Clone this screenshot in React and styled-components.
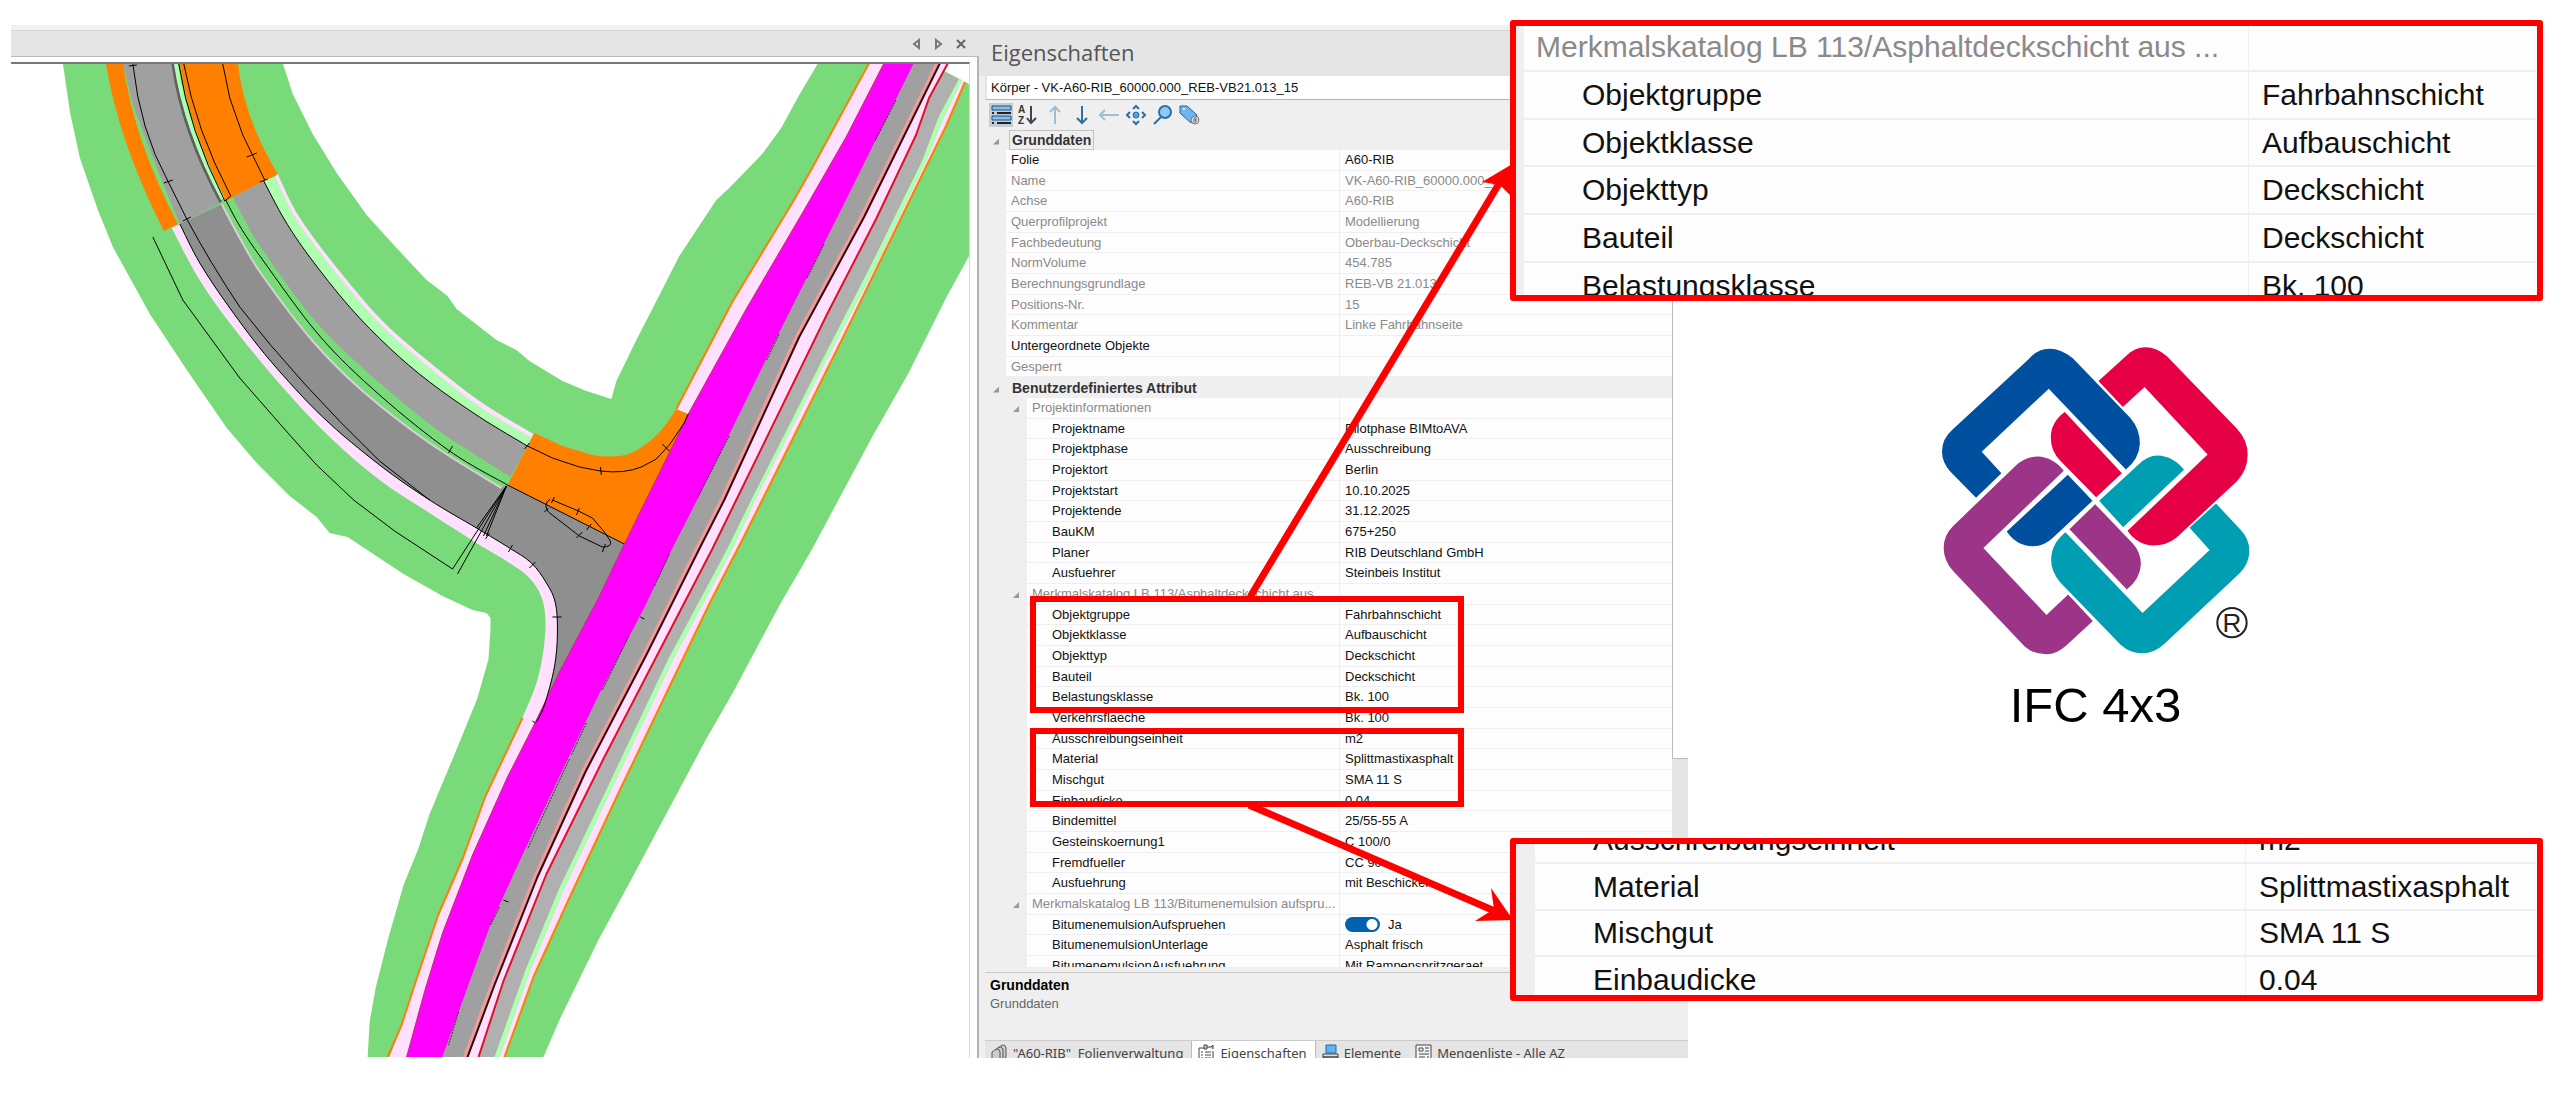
import React from 'react';
import styled, { createGlobalStyle, css } from 'styled-components';

const GlobalStyle = createGlobalStyle`
  body {
    margin: 0;
    background: #fff;
    font-family: 'Liberation Sans', Arial, sans-serif;
  }

  *,
  *::before,
  *::after {
    box-sizing: border-box;
  }
`;

const Slide = styled.main`
  display: flex;
  align-items: flex-start;
  padding: 20px 17px 40px 11px;
`;

const Workspace = styled.section`
  display: flex;
  flex: 1;
  min-width: 0;
  margin-top: 5px;
`;

/* ---------- map ---------- */

const MapPane = styled.div`
  display: flex;
  flex-direction: column;
  flex: 1;
  min-width: 0;
  border-top: 5px solid #f1f1f1;
`;

const MapHeader = styled.div`
  display: flex;
  justify-content: flex-end;
  align-items: center;
  gap: 7px;
  height: 27px;
  padding-right: 11px;
  background: #e5e5e5;
  border-top: 1px solid #d6d6d6;
  border-bottom: 1px solid #bdbdbd;
`;

const HeaderButton = styled.button`
  display: flex;
  align-items: center;
  justify-content: center;
  width: 15px;
  height: 16px;
  padding: 0;
  border: 0;
  background: none;
`;

const MapFrame = styled.div`
  flex: 1;
  display: flex;
  padding: 5px 7px 0 0;
  border-right: 2px solid #b4b4b4;
`;

const MapCanvas = styled.div`
  flex: 1;
  min-width: 0;
  border-top: 2px solid #777;
  border-right: 1px solid #d8d8d8;

  svg {
    display: block;
    width: 100%;
    height: 993px;
  }
`;

/* ---------- properties panel ---------- */

const Panel = styled.aside`
  position: relative;
  flex: none;
  width: 709px;
  padding-left: 6px;
  background: #efefef;
  border-top: 5px solid #f1f1f1;
`;

const PanelTitle = styled.h2`
  margin: 0 0 0 -6px;
  padding-left: 12px;
  height: 46px;
  border-top: 1px solid #d6d6d6;
  background: #e5e5e5;
  color: #555;
  font: 400 22px/43px 'Open Sans', 'Noto Sans', sans-serif;
`;

const ObjectSelect = styled.select`
  display: block;
  width: 100%;
  height: 24px;
  padding: 0 4px;
  appearance: none;
  border: 0;
  border-bottom: 1px solid #b4b4b4;
  border-left: 2px solid #e5e5e5;
  border-radius: 0;
  background: #fff;
  color: #111;
  font: 13px/22px 'Liberation Sans', Arial, sans-serif;
`;

const Toolbar = styled.div`
  display: flex;
  align-items: center;
  gap: 3px;
  height: 29px;
  padding-left: 4px;
`;

const ToolButton = styled.button`
  display: flex;
  align-items: center;
  justify-content: center;
  width: 24px;
  height: 24px;
  padding: 0;
  border: 0;
  background: ${props => (props.$active ? '#c5cdd4' : 'none')};
`;

const GridArea = styled.div`
  display: flex;
  max-height: 838px;
  overflow: hidden;
`;

const Scrollbar = styled.div`
  display: flex;
  flex: none;
  flex-direction: column;
  width: 16px;
  background: #e5e5e5;
`;

const ScrollThumb = styled.div`
  height: 630px;
  background: #fff;
  border-left: 1px solid #bbb;
  border-bottom: 1px solid #bbb;
`;

const callout = css`
  font-size: 30px;
  line-height: 40px;
`;

const Table = styled.table`
  flex: 1;
  width: 100%;
  table-layout: fixed;
  border-collapse: separate;
  border-spacing: 0;
  font-size: 13px;
  line-height: 18px;
  text-align: left;
  ${props => props.$large && callout}

  col:first-child {
    width: ${props => props.$labelWidth}px;
  }

  tr {
    height: ${props => props.$pitch}px;
  }

  tr:nth-child(3n) {
    height: ${props => props.$pitch - 1}px;
  }
`;

const Label = styled.th`
  padding: 0 0 0 ${props => props.$pad}px;
  border-left: ${props => props.$gutter}px solid #efefef;
  border-bottom: ${props => (props.$large ? 2 : 1)}px solid #efefef;
  background: #fdfdfd;
  color: ${props => (props.$muted ? '#8a8a8a' : '#111')};
  font-weight: 400;
  white-space: nowrap;
`;

const Value = styled.td`
  padding: 0 0 0 ${props => (props.$large ? 13 : 5)}px;
  border-left: 1px solid #efefef;
  border-bottom: ${props => (props.$large ? 2 : 1)}px solid #efefef;
  background: #fdfdfd;
  color: ${props => (props.$muted ? '#8a8a8a' : '#111')};
  white-space: nowrap;
`;

const Heading = styled.th`
  padding: 0 0 0 8px;
  background: #efefef;
  color: #333;
  font-size: 14px;
`;

const HeadingText = styled.span`
  display: inline-block;
  padding: 0 2px;
  outline: ${props => (props.$focused ? '1px solid #c4c4c4' : 'none')};
`;

const Expander = styled.button`
  width: 6px;
  height: 6px;
  margin: 0 ${props => (props.$nested ? 13 : 11)}px 1px
    ${props => (props.$nested ? '-19px' : '0')};
  padding: 0;
  border: 0;
  background: #999;
  clip-path: polygon(100% 0, 100% 100%, 0 100%);
`;

const Switch = styled.label`
  display: flex;
  align-items: center;
  gap: 8px;
`;

const SwitchInput = styled.input`
  appearance: none;
  width: 35px;
  height: 15px;
  margin: 0;
  border-radius: 8px;
  background: radial-gradient(
    circle at 27px 50%,
    #fff 0,
    #fff 5px,
    #0063b1 6px
  );
`;

const Description = styled.div`
  height: 68px;
  margin: 5px 0 0;
  padding: 2px 5px;
  border-top: 1px solid #c8c8c8;
  font-size: 13px;
  line-height: 18px;

  strong {
    display: block;
    font-size: 14px;
    line-height: 20px;
  }

  span {
    color: #666;
  }
`;

const Tabs = styled.div`
  display: flex;
  align-items: flex-start;
  height: 18px;
  overflow: hidden;
  background: #e5e5e5;
  border-top: 1px solid #ccc;
`;

const Tab = styled.button`
  display: flex;
  align-items: center;
  gap: 5px;
  height: 24px;
  padding: 0 8px 0 6px;
  border: 0;
  border-right: ${props => (props.$divided ? '1px solid #bbb' : '0')};
  background: ${props => (props.$active ? '#fff' : 'none')};
  color: #444;
  font: 13px/20px 'Noto Sans', 'Open Sans', sans-serif;
  white-space: pre;
`;

/* ---------- annotations ---------- */

const Highlight = styled.div`
  position: absolute;
  left: 51px;
  top: ${props => props.$top}px;
  width: 434px;
  height: ${props => props.$height}px;
  border: 6px solid #fe0000;
`;

const Arrows = styled.svg`
  position: absolute;
  left: 0;
  top: -5px;
  overflow: visible;
  pointer-events: none;
`;

const Figures = styled.section`
  position: relative;
  flex: none;
  width: 1033px;
  margin-left: -178px;
`;

const Callout = styled.div`
  height: ${props => props.$height}px;
  overflow: hidden;
  border: 6px solid #fe0000;
  border-radius: 3px;
  background: #fdfdfd;

  table {
    margin-top: -${props => props.$scroll}px;
  }
`;

const Brand = styled.figure`
  display: flex;
  flex-direction: column;
  align-items: center;
  height: 537px;
  margin: 0;
  padding: 46px 0 0 138px;
`;

const BrandName = styled.figcaption`
  margin-top: 20px;
  color: #000;
  font-size: 49px;
  line-height: 60px;
`;

const baseRows = [
  ['Folie', 'A60-RIB', true],
  ['Name', 'VK-A60-RIB_60000.000_REB'],
  ['Achse', 'A60-RIB'],
  ['Querprofilprojekt', 'Modellierung'],
  ['Fachbedeutung', 'Oberbau-Deckschicht'],
  ['NormVolume', '454.785'],
  ['Berechnungsgrundlage', 'REB-VB 21.013'],
  ['Positions-Nr.', '15'],
  ['Kommentar', 'Linke Fahrbahnseite'],
  ['Untergeordnete Objekte', '', true],
  ['Gesperrt', '']
];

const groups = [
  {
    title: 'Projektinformationen',
    rows: [
      ['Projektname', 'Pilotphase BIMtoAVA'],
      ['Projektphase', 'Ausschreibung'],
      ['Projektort', 'Berlin'],
      ['Projektstart', '10.10.2025'],
      ['Projektende', '31.12.2025'],
      ['BauKM', '675+250'],
      ['Planer', 'RIB Deutschland GmbH'],
      ['Ausfuehrer', 'Steinbeis Institut']
    ]
  },
  {
    title: 'Merkmalskatalog LB 113/Asphaltdeckschicht aus ...',
    rows: [
      ['Objektgruppe', 'Fahrbahnschicht'],
      ['Objektklasse', 'Aufbauschicht'],
      ['Objekttyp', 'Deckschicht'],
      ['Bauteil', 'Deckschicht'],
      ['Belastungsklasse', 'Bk. 100'],
      ['Verkehrsflaeche', 'Bk. 100'],
      ['Ausschreibungseinheit', 'm2'],
      ['Material', 'Splittmastixasphalt'],
      ['Mischgut', 'SMA 11 S'],
      ['Einbaudicke', '0.04'],
      ['Bindemittel', '25/55-55 A'],
      ['Gesteinskoernung1', 'C 100/0'],
      ['Fremdfueller', 'CC 90'],
      ['Ausfuehrung', 'mit Beschicker']
    ]
  },
  {
    title: 'Merkmalskatalog LB 113/Bitumenemulsion aufspru...',
    rows: [
      ['BitumenemulsionAufspruehen', true],
      ['BitumenemulsionUnterlage', 'Asphalt frisch'],
      ['BitumenemulsionAusfuehrung', 'Mit Rampenspritzgeraet']
    ]
  }
];

// Long edges of the main road, from the top of the map to the bottom.
const edges = {
  verge: [[870, 63], [813, 168], [793, 203], [733, 302], [677, 409]],
  vergeInner: [[885, 63], [847, 137], [805, 210], [747, 309], [689, 414]],
  left: [
    [885, 63], [847, 137], [805, 210], [747, 309], [689, 414], [625, 544],
    [599, 598], [560, 672], [536, 722], [508, 777], [473, 855], [443, 933],
    [426, 988], [407, 1057]
  ],
  laneRight: [
    [915, 63], [847, 200], [780, 333], [730, 435], [698, 500], [673, 549],
    [647, 604], [599, 696], [560, 777], [525, 851], [491, 925], [473, 974],
    [443, 1057]
  ],
  middle: [
    [941, 63], [865, 217], [800, 337], [725, 500], [700, 549], [647, 655],
    [586, 772], [538, 877], [495, 985], [468, 1057]
  ],
  red: [
    [949, 63], [930, 98], [917, 135], [877, 219], [828, 314], [737, 500],
    [713, 549], [673, 626], [604, 759], [547, 874], [504, 981], [479, 1057]
  ],
  strip: [
    [960, 79], [940, 116], [923, 161], [873, 263], [817, 372], [752, 500],
    [728, 549], [669, 659], [604, 796], [560, 888], [526, 970], [495, 1057]
  ],
  stripInner: [
    [963, 80], [944, 119], [927, 161], [877, 265], [821, 372], [756, 500],
    [733, 549], [674, 659], [609, 796], [565, 888], [531, 970], [500, 1057]
  ],
  outer: [
    [966, 82], [947, 126], [923, 175], [847, 331], [763, 500], [743, 540],
    [712, 600], [669, 689], [621, 789], [569, 900], [534, 977], [505, 1057]
  ]
};

// Edges of the curved ramp, from its upper end to the junction.
const ramp = {
  kerbOuter: [
    [172, 228], [198, 277], [230, 323], [280, 384], [330, 437], [380, 480],
    [430, 513], [477, 543], [510, 563], [530, 578], [542, 597], [546, 620],
    [544, 650], [537, 683], [523, 718]
  ],
  kerb: [
    [180, 224], [200, 263], [230, 308], [270, 360], [323, 417], [380, 465],
    [430, 500], [477, 528], [510, 548], [532, 563], [547, 583], [556, 603],
    [558, 633], [555, 667], [545, 705], [537, 722]
  ],
  medianLow: [
    [222, 204], [240, 238], [263, 276], [313, 341], [363, 391], [430, 443],
    [502, 488]
  ],
  medianLine: [
    [226, 200], [240, 226], [263, 260], [320, 336], [380, 395], [450, 451],
    [508, 485]
  ],
  medianHigh: [
    [233, 197], [245, 220], [263, 250], [313, 318], [363, 368], [430, 424],
    [470, 451], [511, 477]
  ],
  laneHigh: [
    [264, 181], [285, 220], [310, 257], [350, 307], [390, 348], [430, 382],
    [480, 417], [528, 446]
  ],
  grassHigh: [
    [275, 177], [297, 220], [333, 269], [380, 324], [430, 368], [480, 407],
    [532, 438]
  ],
  edgeHigh: [
    [278, 174], [299, 216], [335, 265], [382, 320], [431, 363], [480, 401],
    [534, 434]
  ]
};

const line = points => `M${points.map(p => p.join(' ')).join('L')}`;
const band = (a, b) => `${line(a.concat([...b].reverse()))}Z`;

// Catmull-Rom segments through the points, without the leading move.
const bend = points =>
  points
    .slice(1)
    .map(([x, y], i) => {
      const [px, py] = points[i];
      const [ax, ay] = points[i - 1] || points[i];
      const [bx, by] = points[i + 2] || points[i + 1];
      return `C${px + (x - ax) / 6} ${py + (y - ay) / 6} ${x -
        (bx - px) / 6} ${y - (by - py) / 6} ${x} ${y}`;
    })
    .join('');

const curve = points => `M${points[0].join(' ')}${bend(points)}`;
const curvedBand = (a, b) => {
  const back = [...b].reverse();
  return `${curve(a)}L${back[0].join(' ')}${bend(back)}Z`;
};

const ticks = [
  [129, 66, 137, 65], [164, 183, 173, 180], [183, 221, 191, 217],
  [247, 157, 257, 153], [260, 182, 268, 179], [449, 453, 453, 446],
  [525, 449, 530, 443], [601, 467, 602, 475], [663, 444, 670, 451],
  [552, 503, 555, 497], [577, 515, 580, 508], [587, 530, 592, 524],
  [577, 538, 583, 532], [603, 552, 606, 544], [545, 512, 549, 508],
  [509, 552, 513, 545], [530, 568, 536, 562], [553, 617, 562, 617],
  [486, 539, 490, 533], [533, 721, 536, 723], [641, 617, 645, 619],
  [504, 900, 509, 902]
];

function RoadMap() {
  return (
    <svg viewBox="11 64 959 993" preserveAspectRatio="none">
      <path
        fill="#78da78"
        d="M63 64L70 112 80 158 98 210 113 247 150 314 187 370 227 428 257 463 290 496 317 517 330 533 348 537 404 574 443 596 473 610 487 613 491 618 491 629 489 659 478 698 456 752 430 814 419 848 404 885 389 937 376 988 370 1022 368 1057 544 1057 560 1020 599 940 630 883 708 737 734 692 781 604 813 549 873 437 910 372 947 298 970 256 970 84 930 63 819 63 800 95 782 128 763 154 730 188 717 200 680 256 653 309 637 340 617 381 612 399 587 391 563 381 530 361 517 350 497 340 457 309 448 296 427 280 397 248 367 215 337 173 313 134 293 94 283 63Z"
      />

      {/* ramp */}
      <path
        fill="#a0a0a0"
        d="M123 63L133 105 157 168 180 224 221 203 197 154 180 98 172 63Z"
      />
      <path
        fill="#ff8000"
        d="M106 63Q118 140 164 231L178 224Q134 140 123 63ZM180 63Q190 130 226 201L278 174Q245 120 238 63Z"
      />
      <path fill="none" stroke="#606060" strokeWidth="3" d="M173 63Q182 130 221 202" />
      <path fill="none" stroke="#b0ffb0" strokeWidth="4" d="M176 63Q186 130 223 199" />
      <path fill="#ffe0ff" d={curvedBand(ramp.kerbOuter, ramp.kerb)} />
      <path fill="#8f8f8f" d={curvedBand(ramp.kerb.slice(0, 8), ramp.medianLow)} />
      <path fill="#8f8f8f" d={`${curve(ramp.kerb.slice(7))}L625 544 508 485 502 488Z`} />
      <path fill="#a0a0a0" d={curvedBand(ramp.medianHigh, ramp.laneHigh)} />
      <path fill="#b0ffb0" d={curvedBand(ramp.laneHigh, ramp.grassHigh)} />
      <path fill="#ffe0ff" d={curvedBand(ramp.grassHigh, ramp.edgeHigh)} />
      <path fill="none" stroke="#d8d0d8" strokeWidth="2" d={curve(ramp.medianLow)} />
      <path
        fill="#ff8000"
        d="M535 433L563 446 593 455Q610 458 627 455 650 446 667 424L677 409 689 414 625 544 508 485Z"
      />

      {/* main road */}
      <path fill="#ffe0ff" d={band(edges.verge, edges.vergeInner)} />
      <path
        fill="#ffe0ff"
        d="M523 718L486 796 463 859 439 914 415 985 402 1025 390 1057 407 1057 426 988 443 933 473 855 508 777 537 722Z"
      />
      <path fill="#ff00ff" d={band(edges.left, edges.laneRight)} />
      <path fill="#a0a0a0" d={band(edges.laneRight, [[930, 63], ...edges.middle])} />
      <path fill="#ffe0ff" d={band(edges.middle, edges.red)} />
      <path fill="#b0b0b0" d={band([[946, 73], ...edges.red.slice(1)], edges.strip)} />
      <path fill="#b0ffb0" d={band(edges.strip, edges.stripInner)} />
      <path fill="#ffe0ff" d={band(edges.stripInner, edges.outer)} />
      <g fill="none" strokeLinejoin="round">
        <path stroke="#ff8000" strokeWidth="2" d={line(edges.verge)} />
        <path
          stroke="#ff8000"
          strokeWidth="2"
          d="M523 718L486 796 463 859 439 914 415 985 402 1025 388 1057"
        />
        <path stroke="#f59a9a" strokeWidth="3" transform="translate(-3 0)" d={line(edges.middle)} />
        <path stroke="#3a0808" strokeWidth="2" d={line(edges.middle)} />
        <path stroke="#e0102a" strokeWidth="2" d={line(edges.red)} />
        <path stroke="#ff8000" strokeWidth="2" d={line(edges.outer)} />
        <path stroke="#c03060" strokeWidth="1" d={line(edges.left)} />
      </g>
      <path
        fill="none"
        stroke="#50204a"
        strokeDasharray="2 1"
        d="M897 100L876 141M825 244L808 278M780 334L767 361M730 436L698 498M670 554L655 586M629 637L603 690M587 723L572 755M570 759L528 849M500 907L491 925M459 1012L449 1045"
      />

      {/* alignment lines */}
      <g fill="none" stroke="#000" strokeWidth="1">
        <path d={curve(ramp.kerb)} />
        <path d={curve(ramp.laneHigh)} />
        <path d={curve(ramp.medianLine)} />
        <path d="M508 485L625 544" />
        <path d="M133 64Q140 130 168 181L187 219Q210 262 240 307 300 384 380 461L430 500" />
        <path d="M179 64Q189 130 225 201L231 196Q196 130 184 64" />
        <path d="M223 64L230 98 243 135 265 180" />
        <path d="M153 237L183 300 240 378 290 435 317 465 354 500 395 531 453 569 507 486" />
        <path d="M507 486L458 574M507 486L477 528M507 486L484 536M507 486L487 536" />
        <path d="M528 446L553 458 580 467 601 471Q625 474 642 467L657 459 670 445 685 423 689 414" />
        <path d="M553 500L579 511 593 518 605 532 611 541Q613 547 603 547L580 536 549 512Q543 504 551 499" />
        {ticks.map(([x1, y1, x2, y2]) => (
          <path key={`${x1}-${y1}`} d={`M${x1} ${y1}L${x2} ${y2}`} />
        ))}
      </g>
    </svg>
  );
}

function Logo() {
  return (
    <svg width="308" height="308" viewBox="126 80 923 923">
      <path
        fill="#00509f"
        d="M228 532L150 452Q126 425 126 393 126 355 157 328L387 115Q413 85 447 85 485 85 518 114L690 292Q719 325 719 370 717 415 677 447L446 205 245 394 304 458ZM503 463L577 541 460 650Q433 677 398 677 350 677 320 633Z"
      />
      <path
        fill="#e60045"
        d="M595 182L680 105Q705 81 735 81 770 81 800 108L1010 325Q1042 360 1042 402 1042 448 1010 482L830 650Q800 675 757 675 710 672 682 631L922 402 733 200 668 260ZM494 275L665 458 588 530 480 420Q452 392 452 352 452 305 494 275Z"
      />
      <path
        fill="#9c3488"
        d="M491 451L250 682 439 883 504 822 578 901 500 973Q470 1001 438 1001 400 1001 373 977L160 752Q131 720 131 682 131 645 158 618L345 437Q375 408 412 408 460 410 491 451ZM585 551L697 668Q722 695 722 732 720 775 680 807L508 626Z"
      />
      <path
        fill="#009eb2"
        d="M597 541L715 432Q742 405 772 405 820 407 851 448L669 620ZM947 549L1020 627Q1047 655 1047 690 1047 730 1018 758L792 970Q762 998 725 998 690 998 662 973L480 785Q453 752 453 718 453 670 496 635L727 877 928 688 868 622Z"
      />
      <circle cx="995" cy="906" r="44" fill="none" stroke="#222" strokeWidth="6" />
      <text
        x="995"
        y="935"
        textAnchor="middle"
        fill="#222"
        fontFamily="Liberation Sans, sans-serif"
        fontSize="78"
      >
        R
      </text>
    </svg>
  );
}

const ink = { fill: 'none', stroke: '#2f6f9f', strokeWidth: 2 };

const tools = [
  {
    name: 'Kategorisiert',
    icon: (
      <>
        <path d="M2 2h19v4H2zM2 12h19v4H2z" fill="#7fc0f2" stroke="#23527a" />
        <path d="M7 9h14M7 19h14M2 9h2M2 19h2" stroke="#222" strokeWidth="2" />
      </>
    )
  },
  {
    name: 'Alphabetisch',
    icon: (
      <>
        <text x="1" y="9" fontSize="10" fontWeight="700" fill="#333">A</text>
        <text x="1" y="20" fontSize="10" fontWeight="700" fill="#333">Z</text>
        <path d="M14 2v17M10 14l4 5 5-5" fill="none" stroke="#444" strokeWidth="2" />
      </>
    )
  },
  { name: 'Nach oben', icon: <path d="M11 20V3M6 8l5-5 5 5" {...ink} stroke="#9dbfd2" /> },
  { name: 'Nach unten', icon: <path d="M11 2v17M6 14l5 5 5-5" {...ink} /> },
  { name: 'Zurück', icon: <path d="M21 11H2M7 6l-5 5 5 5" {...ink} stroke="#9dbfd2" /> },
  {
    name: 'Zentrieren',
    icon: (
      <>
        <circle cx="11" cy="11" r="3" fill="#4aa3e8" stroke="#1f6aa5" />
        <path d="M8 5l3-3 3 3M8 17l3 3 3-3M5 8l-3 3 3 3M17 8l3 3-3 3" {...ink} />
      </>
    )
  },
  {
    name: 'Suchen',
    icon: (
      <>
        <path d="M9 13l-7 7" {...ink} />
        <circle cx="13" cy="8" r="6" fill="#8fc8f5" stroke="#2f6f9f" strokeWidth="2" />
      </>
    )
  },
  {
    name: 'Merkmale',
    icon: (
      <>
        <path d="M1 2h7l10 9-6 8L1 9z" fill="#6fb4ec" stroke="#23629a" />
        <circle cx="5" cy="5" r="1" fill="#fff" />
        <circle cx="16" cy="16" r="4" fill="#d8d8d8" stroke="#777" />
        <path d="M14 15h4M14 17h4M16 13v6" stroke="#777" />
      </>
    )
  }
];

const tabs = [
  {
    name: '"A60-RIB"  Folienverwaltung',
    divided: true,
    icon: (
      <g fill="#ccc" stroke="#555">
        <path d="M7 4q7-6 8 0v9l-4 3z" />
        <path d="M4 6q7-6 8 0v9l-4 3z" />
        <path d="M1 8q7-6 8 0v9H1z" />
      </g>
    )
  },
  {
    name: 'Eigenschaften',
    active: true,
    divided: true,
    icon: (
      <g fill="none" stroke="#444">
        <path d="M6 4H1v13h14V7" />
        <path d="M3 8h2M3 11h2M3 14h2M7 8h6M7 11h6M7 14h6" />
        <path d="M6 1h3v4H6zM9 3h4l2-2v4" fill="#ccc" />
      </g>
    )
  },
  {
    name: 'Elemente',
    icon: (
      <>
        <path d="M4 1h10v8H4z" fill="#5fb4f0" stroke="#1f6aa5" />
        <path d="M1 10h15v3H1zM1 13h15v3H1z" fill="#ddd" stroke="#444" />
      </>
    )
  },
  {
    name: 'Mengenliste - Alle AZ',
    icon: (
      <g fill="none" stroke="#444">
        <path d="M1 1h15v15H1z" fill="#f4f4f4" />
        <path d="M4 4h4v3H4zM10 4h4M10 7h4M4 10h10M4 13h6M12 13h2" />
      </g>
    )
  }
];

function GroupRows({ title, rows }) {
  return (
    <>
      <tr>
        <Label $gutter={42} $pad={5} $muted>
          <Expander $nested aria-label={title} />
          {title}
        </Label>
        <Value />
      </tr>
      {rows.map(([label, value]) => (
        <tr key={label}>
          <Label $gutter={42} $pad={25}>
            {label}
          </Label>
          <Value>
            {value === true ? (
              <Switch>
                <SwitchInput type="checkbox" defaultChecked />
                Ja
              </Switch>
            ) : (
              value
            )}
          </Value>
        </tr>
      ))}
    </>
  );
}

function PropertyTable() {
  return (
    <Table $pitch={21} $labelWidth={354}>
      <colgroup>
        <col />
        <col />
      </colgroup>
      <tbody>
        <tr>
          <Heading colSpan={2}>
            <Expander aria-label="Grunddaten" />
            <HeadingText $focused>Grunddaten</HeadingText>
          </Heading>
        </tr>
        {baseRows.map(([label, value, editable]) => (
          <tr key={label}>
            <Label $gutter={21} $pad={5} $muted={!editable}>
              {label}
            </Label>
            <Value $muted={!editable}>{value}</Value>
          </tr>
        ))}
        <tr>
          <Heading colSpan={2}>
            <Expander aria-label="Benutzerdefiniertes Attribut" />
            <HeadingText>Benutzerdefiniertes Attribut</HeadingText>
          </Heading>
        </tr>
        {groups.map(group => (
          <GroupRows key={group.title} {...group} />
        ))}
      </tbody>
    </Table>
  );
}

function DetailCallout({ title, rows, height, scroll, pitch, gutter, labelWidth }) {
  return (
    <Callout $height={height} $scroll={scroll}>
      <Table $large $pitch={pitch} $labelWidth={labelWidth}>
        <colgroup>
          <col />
          <col />
        </colgroup>
        <tbody>
          {title && (
            <tr>
              <Label $large $gutter={gutter} $pad={12} $muted>
                {title}
              </Label>
              <Value $large />
            </tr>
          )}
          {rows.map(([label, value]) => (
            <tr key={label}>
              <Label $large $gutter={gutter} $pad={58}>
                {label}
              </Label>
              <Value $large>{value}</Value>
            </tr>
          ))}
        </tbody>
      </Table>
    </Callout>
  );
}

export default class App extends React.Component {
  render() {
    const catalogue = groups[1];

    return (
      <>
        <GlobalStyle />
        <Slide>
          <Workspace>
            <MapPane>
              <MapHeader>
                <HeaderButton aria-label="Zurück">
                  <svg width="9" height="12" fill="none" stroke="#777" strokeWidth="2">
                    <path d="M7 2v8L2 6z" />
                  </svg>
                </HeaderButton>
                <HeaderButton aria-label="Weiter">
                  <svg width="9" height="12" fill="none" stroke="#777" strokeWidth="2">
                    <path d="M2 2v8l5-4z" />
                  </svg>
                </HeaderButton>
                <HeaderButton aria-label="Schließen">
                  <svg width="10" height="10" stroke="#666" strokeWidth="2">
                    <path d="M1 1l8 8M9 1L1 9" />
                  </svg>
                </HeaderButton>
              </MapHeader>
              <MapFrame>
                <MapCanvas>
                  <RoadMap />
                </MapCanvas>
              </MapFrame>
            </MapPane>

            <Panel>
              <PanelTitle>Eigenschaften</PanelTitle>
              <ObjectSelect aria-label="Objekt">
                <option>Körper - VK-A60-RIB_60000.000_REB-VB21.013_15</option>
              </ObjectSelect>
              <Toolbar>
                {tools.map(({ name, icon }, i) => (
                  <ToolButton key={name} aria-label={name} $active={i === 0}>
                    <svg width="22" height="22">{icon}</svg>
                  </ToolButton>
                ))}
              </Toolbar>
              <GridArea>
                <PropertyTable />
                <Scrollbar>
                  <ScrollThumb />
                </Scrollbar>
              </GridArea>
              <Description>
                <strong>Grunddaten</strong>
                <span>Grunddaten</span>
              </Description>
              <Tabs role="tablist">
                {tabs.map(({ name, icon, active, divided }) => (
                  <Tab
                    key={name}
                    role="tab"
                    aria-selected={!!active}
                    $active={active}
                    $divided={divided}
                  >
                    <svg width="17" height="18">{icon}</svg>
                    {name}
                  </Tab>
                ))}
              </Tabs>
              <Highlight $top={566} $height={117} />
              <Highlight $top={698} $height={79} />
              <Arrows width="709" height="1032">
                <g stroke="#fe0000" strokeWidth="7" fill="#fe0000">
                  <path d="M271 572L521 157" />
                  <path d="M270 780L518 887" />
                </g>
                <path fill="#fe0000" d="M535 138L503 157 521 160 535 174Z" />
                <path fill="#fe0000" d="M534 895L512 863 515 884 496 896Z" />
              </Arrows>
            </Panel>
          </Workspace>

          <Figures>
            <DetailCallout
              title={catalogue.title}
              rows={catalogue.rows.slice(0, 5)}
              height={281}
              scroll={2}
              pitch={48}
              gutter={8}
              labelWidth={732}
            />
            <Brand>
              <Logo />
              <BrandName>IFC 4x3</BrandName>
            </Brand>
            <DetailCallout
              rows={catalogue.rows.slice(6, 10)}
              height={163}
              scroll={27}
              pitch={47}
              gutter={19}
              labelWidth={729}
            />
          </Figures>
        </Slide>
      </>
    );
  }
}
